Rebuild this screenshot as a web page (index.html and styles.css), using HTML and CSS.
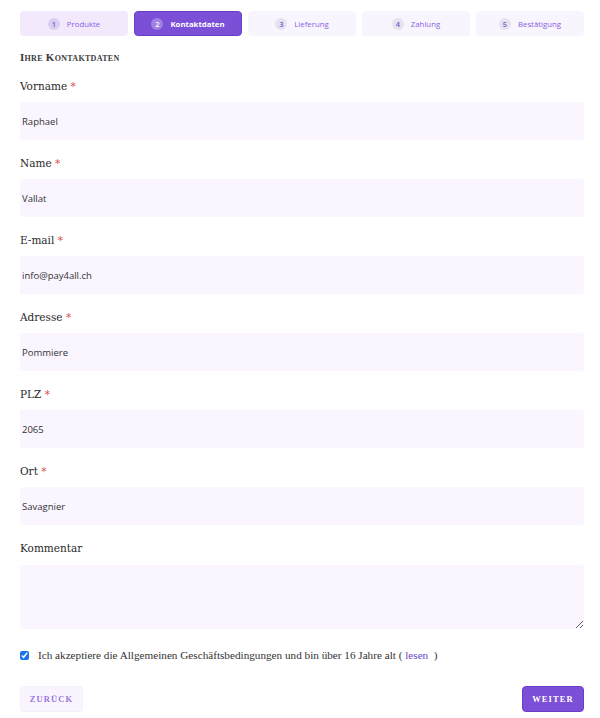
FILE: index.html
```html
<!DOCTYPE html>
<html lang="de">
<head>
<meta charset="utf-8">
<title>Kontaktdaten</title>
<link rel="stylesheet" href="styles.css">
</head>
<body>
<div class="page">
  <nav class="steps">
    <div class="step done"><span class="num">1</span>Produkte</div>
    <div class="step active"><span class="num">2</span>Kontaktdaten</div>
    <div class="step"><span class="num">3</span>Lieferung</div>
    <div class="step"><span class="num">4</span>Zahlung</div>
    <div class="step"><span class="num">5</span>Bestätigung</div>
  </nav>

  <h2 class="section-title">Ihre Kontaktdaten</h2>

  <form class="form">
    <div class="field">
      <label class="label">Vorname <span class="req">*</span></label>
      <input class="input" type="text" value="Raphael">
    </div>
    <div class="field">
      <label class="label">Name <span class="req">*</span></label>
      <input class="input" type="text" value="Vallat">
    </div>
    <div class="field">
      <label class="label">E-mail <span class="req">*</span></label>
      <input class="input" type="text" value="info@pay4all.ch">
    </div>
    <div class="field">
      <label class="label">Adresse <span class="req">*</span></label>
      <input class="input" type="text" value="Pommiere">
    </div>
    <div class="field">
      <label class="label">PLZ <span class="req">*</span></label>
      <input class="input" type="text" value="2065">
    </div>
    <div class="field">
      <label class="label">Ort <span class="req">*</span></label>
      <input class="input" type="text" value="Savagnier">
    </div>
    <div class="field comment">
      <label class="label">Kommentar</label>
      <textarea class="textarea"></textarea>
    </div>

    <label class="agree">
      <input class="check" type="checkbox" checked>
      <span>Ich akzeptiere die Allgemeinen Geschäftsbedingungen und bin über 16 Jahre alt (&nbsp;<a class="link" href="#">lesen</a>&nbsp; )</span>
    </label>

    <div class="actions">
      <button class="btn btn-back" type="button">Zurück</button>
      <button class="btn btn-next" type="button">Weiter</button>
    </div>
  </form>
</div>
</body>
</html>
```
FILE: styles.css
```css
* { box-sizing: border-box; }
html, body { margin: 0; padding: 0; background: #fff; }
body { font-family: "Liberation Serif", "Times New Roman", serif; color: #2b2b2b; }

.page { padding: 11px 16px 0 20px; }

.steps {
  display: grid;
  grid-template-columns: repeat(5, 1fr);
  gap: 6px;
}
.step {
  height: 25px;
  border-radius: 4px;
  background: #f9f5fe;
  color: #8a5ee0;
  font-family: "Open Sans", "Noto Sans", sans-serif;
  font-size: 7.8px;
  display: flex;
  align-items: center;
  justify-content: center;
  gap: 7px;
}
.step.done { background: #f2e9fd; }
.step.active {
  background: #7c4fd7;
  border: 1px solid #6a3ccb;
  color: #fff;
  font-weight: 700;
}
.num {
  width: 12px;
  height: 12px;
  border-radius: 50%;
  background: #e7e3ee;
  color: #7c5bc8;
  display: inline-flex;
  align-items: center;
  justify-content: center;
  font-size: 7.5px;
  font-weight: 600;
}
.step.done .num { background: #d8d0f0; }
.step.active .num { background: rgba(255,255,255,0.28); color: #fff; }

.section-title {
  margin: 14px 0 14px;
  font-size: 11px;
  line-height: 14px;
  font-weight: 700;
  font-variant: small-caps;
  letter-spacing: 0.3px;
  color: #3a3a3a;
}

.form { display: flex; flex-direction: column; }
.field { display: flex; flex-direction: column; margin-bottom: 15px; }
.label {
  font-family: "DejaVu Serif", "Liberation Serif", serif;
  font-size: 10.5px;
  line-height: 16px;
  margin-bottom: 8px;
  color: #2a2a2a;
}
.req { color: #d9534f; }
.input {
  height: 38px;
  border: none;
  border-radius: 3px;
  background: #faf5ff;
  padding: 0 2px;
  font-family: "Open Sans", "Noto Sans", sans-serif;
  font-size: 9.5px;
  color: #333;
  outline: none;
}
.comment { margin-bottom: 18px; }
.comment .label { margin-bottom: 9px; }
.textarea {
  height: 64px;
  border: none;
  border-radius: 3px;
  background: #faf5ff;
  outline: none;
  font-family: "Open Sans", sans-serif;
}

.agree {
  display: flex;
  align-items: center;
  gap: 9px;
  font-size: 11.2px;
  line-height: 16px;
  color: #333;
}
.check { margin: 0; width: 9px; height: 9px; accent-color: #1a73e8; }
.link { color: #6b46c9; text-decoration: none; font-family: "Liberation Serif", serif; }

.actions {
  display: flex;
  justify-content: space-between;
  margin-top: 23px;
}
.btn {
  height: 26px;
  border-radius: 4px;
  font-family: "Liberation Serif", serif;
  font-size: 8.5px;
  font-weight: 700;
  letter-spacing: 1.1px;
  text-transform: uppercase;
  cursor: pointer;
}
.btn-back {
  width: 63px;
  background: #f9f4fe;
  border: 1px solid #f6f0fd;
  color: #9b74e0;
}
.btn-next {
  width: 62px;
  background: #7c4fd7;
  border: 1px solid #6a3ccb;
  color: #fff;
}
```
